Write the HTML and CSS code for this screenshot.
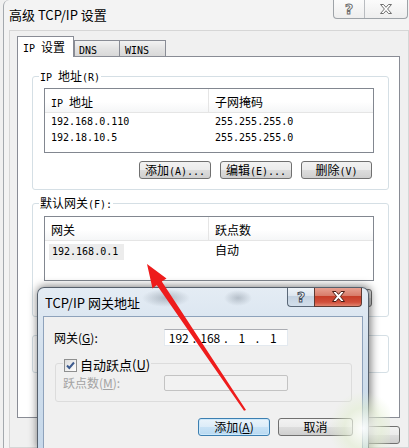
FILE: index.html
```html
<!DOCTYPE html>
<html lang="zh-CN">
<head>
  <meta charset="UTF-8" />
  <meta name="viewport" content="width=device-width, initial-scale=1.0"/>
  <title>高级 TCP/IP 设置</title>
  <link rel="stylesheet" href="styles.css">
</head>
<body>

  <!-- Main window -->
  <div class="win">
    <div class="titlebar">
      <span class="title">高级 TCP/IP 设置</span>
      <div class="caption">
        <span class="cap-btn cap-help">?</span>
        <span class="cap-btn cap-close">
          <svg width="12" height="10" viewBox="0 0 12 10"><polygon points="0.5,0.5 3.5,0.5 6,3.3 8.5,0.5 11.5,0.5 7.6,5 11.5,9.5 8.5,9.5 6,6.7 3.5,9.5 0.5,9.5 4.4,5" fill="#fff" stroke="#6f6f6f" stroke-width="1"/></svg>
        </span>
      </div>
    </div>

    <div class="client">
      <div class="tabs">
        <div class="tab active"><span class="m">IP </span>设置</div>
        <div class="tab"><span class="m">DNS</span></div>
        <div class="tab tab-wins"><span class="m">WINS</span></div>
      </div>

      <div class="panel">
        <div class="group group-ip">
          <div class="legend"><span class="m">IP </span>地址<span class="m">(R)</span></div>
          <div class="list">
            <div class="list-head">
              <div class="col col1"><span class="m">IP </span>地址</div>
              <div class="col">子网掩码</div>
            </div>
            <div class="list-body">
              <div class="row"><div class="col col1 m">192.168.0.110</div><div class="col m">255.255.255.0</div></div>
              <div class="row"><div class="col col1 m">192.18.10.5</div><div class="col m">255.255.255.0</div></div>
            </div>
          </div>
          <div class="btn-row">
            <div class="btn">添加<span class="m">(A)...</span></div>
            <div class="btn">编辑<span class="m">(E)...</span></div>
            <div class="btn btn-narrow">删除<span class="m">(V)</span></div>
          </div>
        </div>

        <div class="group group-gw">
          <div class="legend">默认网关<span class="m">(F):</span></div>
          <div class="list">
            <div class="list-head">
              <div class="col col1">网关</div>
              <div class="col">跃点数</div>
            </div>
            <div class="list-body">
              <div class="row"><div class="col col1 col-sel"><span class="sel m">192.168.0.1</span></div><div class="col">自动</div></div>
            </div>
          </div>
          <div class="btn-row">
            <div class="btn">添加<span class="m">(D)...</span></div>
            <div class="btn">编辑<span class="m">(T)...</span></div>
            <div class="btn btn-narrow">删除<span class="m">(M)</span></div>
          </div>
        </div>

        <div class="group group-metric"></div>
      </div>

      <div class="win-btns">
        <div class="btn btn-wide">确定</div>
        <div class="btn btn-wide btn-last">取消</div>
      </div>
    </div>
  </div>

  <!-- Gateway dialog -->
  <div class="dlg">
    <div class="dlg-title">
      <span class="dlg-title-text">TCP/IP 网关地址</span>
      <div class="dlg-caption">
        <span class="dcap dcap-help">?</span>
        <span class="dcap dcap-close">
          <svg width="13" height="11" viewBox="0 0 13 11"><polygon points="0.5,0.5 4,0.5 6.5,3.4 9,0.5 12.5,0.5 8.4,5.5 12.5,10.5 9,10.5 6.5,7.6 4,10.5 0.5,10.5 4.6,5.5" fill="#fff" stroke="#4a1c14" stroke-width="1"/></svg>
        </span>
      </div>
    </div>
    <div class="dlg-client">
      <div class="field-row">
        <div class="field-label">网关(<u>G</u>):</div>
        <div class="ipbox">
          <span class="oct">192</span><span class="dot">.</span><span class="oct">168</span><span class="dot">.</span><span class="oct">1</span><span class="dot">.</span><span class="oct">1</span>
        </div>
      </div>

      <div class="check-group">
        <div class="check-legend">
          <span class="checkbox">
            <svg width="11" height="11" viewBox="0 0 11 11"><path d="M2 5.5 L4.3 8 L9 2.5" fill="none" stroke="#3d5b8f" stroke-width="2"/></svg>
          </span>
          <span class="check-text">自动跃点(<u>U</u>)</span>
        </div>
        <div class="metric-row">
          <div class="metric-label">跃点数(<u>M</u>):</div>
          <div class="ipbox disabled"></div>
        </div>
      </div>

      <div class="dlg-btns">
        <div class="btn btn-default">添加(<u>A</u>)</div>
        <div class="btn btn-cancel">取消</div>
      </div>
    </div>
  </div>

  <div class="glare"></div>

  <!-- Red arrow drawn over the screenshot -->
  <svg class="arrow" width="409" height="448" viewBox="0 0 409 448">
    <polygon points="147,264 166.5,278.5 161.8,281.6 246,410 244,410.8 156.8,285 152.5,288.5" fill="#ee1c1c"/>
  </svg>

</body>
</html>
```

FILE: styles.css
```css
* {
  box-sizing: border-box;
}

body {
  margin: 0;
  width: 409px;
  height: 448px;
  overflow: hidden;
  position: relative;
  background: #f0f0f0;
  font-family: "Noto Sans CJK SC", sans-serif;
  font-size: 12px;
  line-height: 16px;
  color: #000;
}

.m {
  font-family: "DejaVu Sans Mono", monospace;
  font-size: 10px;
}

u {
  text-decoration: underline;
  text-underline-offset: 1px;
}

/* main window */
.win {
  margin-left: 3px;
  width: 406px;
  height: 448px;
  border-left: 1px solid #a4a9ae;
  border-top-left-radius: 6px;
  background: #f3f3f3;
  overflow: hidden;
}

.titlebar {
  height: 30px;
  display: flex;
  align-items: center;
  padding-left: 5px;
}

.title {
  font-size: 13px;
  color: #000;
}

.caption {
  margin-left: auto;
  margin-right: 1px;
  align-self: flex-start;
  display: flex;
  height: 19px;
  border: 1px solid #9ea3a8;
  border-top: none;
  border-radius: 0 0 4px 4px;
  background: linear-gradient(#fbfbfb, #eeeeee);
}

.cap-btn {
  display: flex;
  align-items: center;
  justify-content: center;
}

.cap-help {
  width: 31px;
  border-right: 1px solid #b9bcc0;
  font-family: "DejaVu Sans", sans-serif;
  font-size: 14px;
  font-weight: bold;
  color: #fff;
  -webkit-text-stroke: 1px #6f6f6f;
}

.cap-close {
  width: 42px;
}

.client {
  margin-left: 5px;
  width: 400px;
  height: 418px;
  border: 1px solid #d6d6d6;
  background: #f0f0f0;
  padding: 5px 0 0 7px;
}

/* tabs */
.tabs {
  display: flex;
  align-items: flex-end;
  height: 21px;
  margin-bottom: -1px;
  position: relative;
  z-index: 1;
}

.tab {
  height: 16px;
  width: 46px;
  margin-bottom: 1px;
  padding-left: 4px;
  line-height: 15px;
  border: 1px solid #898c95;
  border-bottom: none;
  background: linear-gradient(#f2f2f2, #e3e3e3 50%, #d8d8d8);
}

.tab.active {
  height: 21px;
  width: 57px;
  margin-bottom: 0;
  padding-left: 5px;
  line-height: 20px;
  background: #fff;
}

.tab-wins {
  width: 47px;
  margin-left: -1px;
  padding-left: 5px;
}

.panel {
  width: 383px;
  height: 362px;
  border: 1px solid #898c95;
  background: #fff;
  padding: 0 10px 0 14px;
}

/* group boxes */
.group {
  position: relative;
  width: 357px;
  border: 1px solid #d5dfe5;
  border-radius: 3px;
}

.legend {
  position: absolute;
  left: 6px;
  top: -9px;
  padding: 0 1px;
  background: #fff;
  line-height: 16px;
}

.group-ip {
  margin-top: 19px;
  height: 114px;
  padding: 11px 14px 0 11px;
}

.group-gw {
  margin-top: 13px;
  height: 114px;
  padding: 12px 14px 0 11px;
}

.group-metric {
  margin-top: 18px;
  height: 38px;
}

/* list views */
.list {
  width: 330px;
  height: 65px;
  border: 1px solid #828790;
  background: #fff;
}

.list-head {
  display: flex;
  height: 24px;
  border-bottom: 1px solid #e5e5e5;
  background: linear-gradient(#fff, #fff 55%, #f5f6f7);
}

.list-head .col {
  padding-top: 2px;
  line-height: 21px;
}

.list-head .col1 {
  border-right: 1px solid #e5e5e5;
}

.col {
  padding-left: 6px;
}

.col1 {
  width: 164px;
}

.list-body {
  padding-top: 1px;
}

.row {
  display: flex;
  height: 16px;
  line-height: 16px;
}

.col-sel {
  padding-left: 4px;
}

.sel {
  display: inline-block;
  height: 16px;
  padding: 0 6px 0 3px;
  background: #ececec;
}

/* buttons */
.btn-row {
  display: flex;
  justify-content: flex-end;
  gap: 9px;
  margin-top: 8px;
  padding-right: 2px;
}

.btn {
  width: 72px;
  height: 18px;
  border: 1px solid #707070;
  border-radius: 3px;
  background: linear-gradient(#f2f2f2, #ebebeb 50%, #dddddd 51%, #cfcfcf);
  text-align: center;
  line-height: 16px;
}

.btn-narrow {
  width: 71px;
}

.win-btns {
  display: flex;
  justify-content: flex-end;
  gap: 6px;
  width: 383px;
  margin-top: 8px;
}

.btn-wide {
  width: 75px;
}

.btn-last {
  width: 86px;
  padding-right: 14px;
}

/* gateway dialog */
.dlg {
  position: absolute;
  left: 37px;
  top: 287px;
  width: 332px;
  height: 161px;
  overflow: hidden;
  padding: 0 5px;
  border: 1px solid #56606c;
  border-bottom: none;
  border-radius: 7px 7px 0 0;
  background:
    radial-gradient(ellipse 24px 9px at 128px 10px, rgba(80, 92, 106, 0.35), transparent),
    radial-gradient(ellipse 14px 8px at 200px 10px, rgba(80, 92, 106, 0.3), transparent),
    linear-gradient(#e4ecf4, #d3e0ed 40%, #c6d8ea);
  box-shadow: 1px 0 9px 1px rgba(0, 0, 0, 0.5);
  z-index: 2;
}

.dlg-title {
  height: 28px;
  display: flex;
  align-items: center;
  padding-left: 2px;
}

.dlg-title-text {
  font-size: 13px;
  padding-top: 2px;
}

.dlg-caption {
  margin-left: auto;
  margin-right: 1px;
  margin-top: -1px;
  align-self: flex-start;
  display: flex;
  height: 20px;
}

.dcap {
  display: flex;
  align-items: center;
  justify-content: center;
  border: 1px solid #5a6878;
  border-top: none;
}

.dcap-help {
  width: 27px;
  border-right: none;
  border-radius: 0 0 0 4px;
  background: linear-gradient(#f1f5f9, #dde6ef 45%, #c4d2e1 50%, #d3dfeb);
  font-family: "DejaVu Sans", sans-serif;
  font-size: 14px;
  font-weight: bold;
  color: #fff;
  -webkit-text-stroke: 1px #45505e;
}

.dcap-close {
  width: 48px;
  border-color: #5d3a33;
  border-radius: 0 0 4px 0;
  background: linear-gradient(#eaa697, #d87d6b 45%, #c63e29 50%, #d14f3b 80%, #e0846f);
}

.dlg-client {
  width: 320px;
  height: 133px;
  border: 1px solid #8ea2bb;
  border-bottom: none;
  background: #f0f0f0;
}

.field-row {
  display: flex;
  align-items: center;
  height: 17px;
  margin-top: 12px;
  padding-left: 10px;
}

.field-label {
  width: 110px;
}

.ipbox {
  width: 124px;
  height: 17px;
  display: grid;
  grid-template-columns: 1fr 4px 1fr 4px 1fr 4px 1fr;
  align-items: center;
  border: 1px solid #e3e9ef;
  border-top-color: #abadb3;
  background: #fff;
  line-height: 15px;
}

.oct {
  text-align: center;
}

.dot {
  text-align: center;
}

.ipbox.disabled {
  height: 16px;
  border: 1px solid #c3c3c3;
  border-radius: 2px;
  background: #f2f2f2;
}

.check-group {
  position: relative;
  width: 297px;
  height: 39px;
  margin: 17px 0 0 11px;
  padding: 11px 0 0 7px;
  border: 1px solid #dcdcdc;
  border-radius: 3px;
}

.check-legend {
  position: absolute;
  left: 7px;
  top: -7px;
  display: flex;
  align-items: center;
  gap: 3px;
  padding: 0 1px;
  background: #f0f0f0;
}

.checkbox {
  width: 13px;
  height: 13px;
  display: flex;
  align-items: center;
  justify-content: center;
  border: 1px solid #8e8f8f;
  background: linear-gradient(135deg, #dcdcdc, #ffffff);
}

.check-text {
  font-size: 13px;
}

.metric-row {
  display: flex;
  align-items: center;
  height: 16px;
}

.metric-label {
  width: 101px;
  color: #a3a3a3;
}

.dlg-btns {
  display: flex;
  gap: 8px;
  margin: 16px 0 0 154px;
}

.btn-default {
  border-color: #3c7fb1;
  background: linear-gradient(#eaf4fb, #dcecf8 50%, #c8e2f5 51%, #b8d9f1);
  box-shadow: inset 0 0 0 1px #cde8fa;
}

.btn-cancel {
  width: 75px;
}

.glare {
  position: absolute;
  left: 330px;
  top: 392px;
  width: 60px;
  height: 56px;
  background: radial-gradient(ellipse at 55% 65%, rgba(255, 255, 255, 0.9), rgba(225, 238, 205, 0.5) 40%, rgba(255, 255, 255, 0) 72%);
  z-index: 3;
  pointer-events: none;
}

.arrow {
  position: absolute;
  left: 0;
  top: 0;
  z-index: 4;
  pointer-events: none;
}
```
